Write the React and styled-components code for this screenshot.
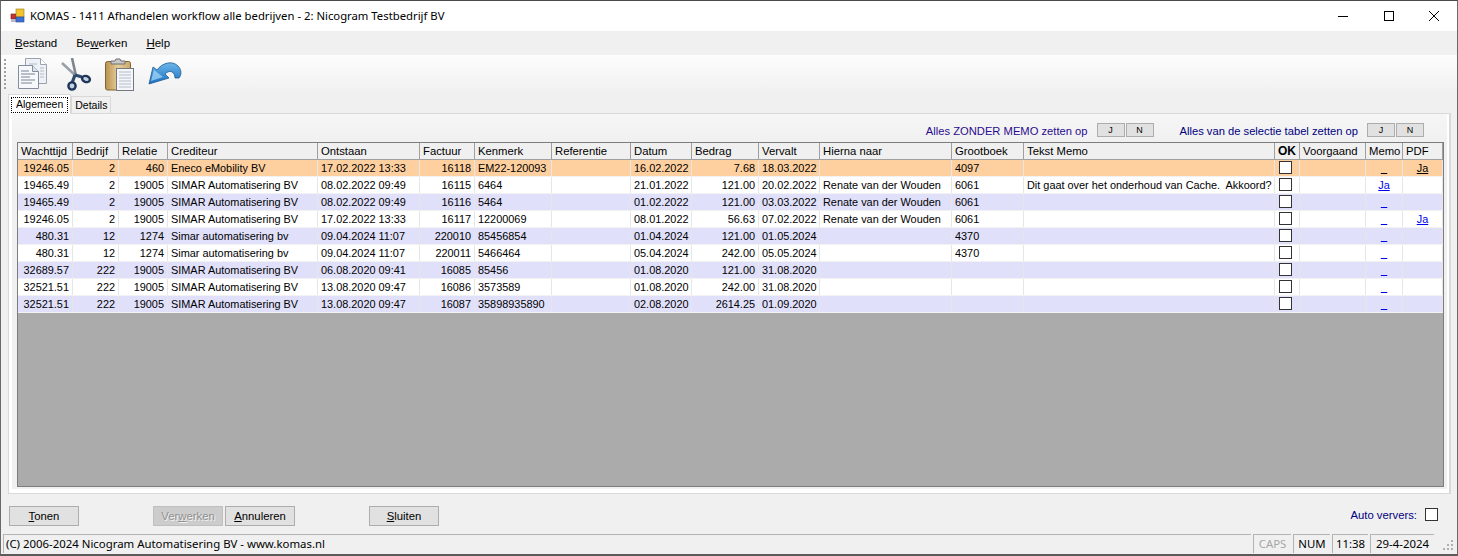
import React from 'react'
import styled, { createGlobalStyle } from 'styled-components'

const GlobalStyle = createGlobalStyle`
html, body { margin: 0; padding: 0; overflow: hidden; background: #f0f0f0; }
* { box-sizing: border-box; }
`

const COLUMNS = '55px 46px 49px 150px 102px 55px 77px 79px 61px 67px 61px 132px 72px 251px 25px 66px 37px 40px'

const Window = styled.div`
width: 1458px;
height: 556px;
display: flex;
flex-direction: column;
background: #f0f0f0;
border-top: 1px solid #4a4a4a;
border-bottom: 2px solid #5a5a5a;
border-left: 1px solid #6a6a6a;
border-right: 1px solid #6a6a6a;
font-family: "Liberation Sans", Arial, sans-serif;
font-size: 11.3px;
color: #000;
overflow: hidden;
`
const TitleBar = styled.div`
height: 30px;
flex: none;
background: #fff;
display: flex;
align-items: center;
padding-left: 9px;
`
const TitleText = styled.div`
font-family: "Noto Sans", sans-serif;
font-size: 11.3px;
margin-left: 4px;
margin-top: -1px;
white-space: nowrap;
`
const WindowControls = styled.div`
margin-left: auto;
display: flex;
align-items: center;
margin-top: -1px;
`
const WindowControl = styled.div`
width: 45.5px;
height: 30px;
display: flex;
align-items: center;
justify-content: center;
`
const MenuBar = styled.div`
height: 24px;
flex: none;
display: flex;
align-items: center;
padding-left: 14px;
gap: 19px;
background: #f0f0f0;
font-size: 11.5px;
`
const MenuItem = styled.div`
white-space: nowrap;
`
const Mnemonic = styled.span`
text-decoration: underline;
`
const ToolBar = styled.div`
height: 38px;
flex: none;
display: flex;
align-items: center;
padding-left: 3px;
background: linear-gradient(#fdfdfd, #f0f0f0);
`
const Grip = styled.div`
width: 2px;
height: 31px;
margin-right: 11px;
background: repeating-linear-gradient(#a0a0a0 0 2px, transparent 2px 4px);
`
const ToolIcons = styled.div`
display: flex;
align-items: center;
gap: 12px;
`
const TabStrip = styled.div`
height: 20px;
flex: none;
display: flex;
align-items: flex-end;
padding-left: 7px;
background: #f0f0f0;
font-size: 10.5px;
`
const Tab = styled.div`
height: ${p => (p.$active ? '20px' : '17px')};
padding: 0 ${p => (p.$active ? '2px' : '3px')};
background: ${p => (p.$active ? '#fff' : '#f0f0f0')};
border: 1px solid #d9d9d9;
border-bottom: none;
display: flex;
align-items: center;
position: relative;
z-index: ${p => (p.$active ? 1 : 0)};
margin-bottom: ${p => (p.$active ? '-1px' : '0')};
`
const TabLabel = styled.span`
border: ${p => (p.$focus ? '1px dotted #000' : 'none')};
padding: 0 ${p => (p.$focus ? '4px' : '0')} ${p => (p.$focus ? '2px' : '0')};
line-height: ${p => (p.$focus ? '12px' : '14px')};
white-space: nowrap;
`
const PanelWrap = styled.div`
height: 381px;
flex: none;
margin: 0 6px 0 7px;
border: 1px solid #d9d9d9;
border-width: 1px 2px 1px 1px;
background: #fff;
padding: 0 2px 4px 3px;
`
const Panel = styled.div`
height: 100%;
background: linear-gradient(#f6f6f6, #f0f0f0 30px);
padding: 0 3px 2px 5px;
display: flex;
flex-direction: column;
`
const SetterBar = styled.div`
height: 28px;
flex: none;
display: flex;
align-items: flex-end;
padding: 0 20px 5px 0;
justify-content: flex-end;
font-size: 11.2px;
`
const SetterLabel = styled.div`
color: ${p => p.$color};
margin-right: 9px;
margin-left: ${p => p.$gap}px;
white-space: nowrap;
`
const SmallButton = styled.div`
width: 28px;
height: 14px;
margin-left: ${p => (p.$second ? '1px' : '0')};
background: #e1e1e1;
border: 1px solid #adadad;
font-size: 9px;
display: flex;
align-items: center;
justify-content: center;
`
const Grid = styled.div`
flex: 1;
background: #ababab;
border: 1px solid #7d7d7d;
overflow: hidden;
`
const HeaderRow = styled.div`
display: grid;
grid-template-columns: ${COLUMNS};
height: 17px;
background: #f0f0f0;
border-bottom: 1px solid #a0a0a0;
`
const HeaderCell = styled.div`
border-right: 1px solid #a0a0a0;
padding-left: 3px;
line-height: 16px;
white-space: nowrap;
overflow: hidden;
font-weight: ${p => (p.$bold ? 700 : 400)};
font-size: ${p => (p.$bold ? '12px' : 'inherit')};
`
const Row = styled.div`
display: grid;
grid-template-columns: ${COLUMNS};
height: 17px;
font-size: 10.9px;
background: ${p => p.$bg};
border-bottom: 1px solid #f2f2f2;
`
const Cell = styled.div`
border-right: 1px solid #e6e6e6;
padding: 0 ${p => (p.$right ? '3px' : '0')} 0 ${p => (p.$right ? '0' : '3px')};
text-align: ${p => (p.$right ? 'right' : 'left')};
line-height: 16px;
white-space: pre;
overflow: hidden;
`
const CheckCell = styled(Cell)`
padding: 1px 0 0 4px;
`
const CheckBox = styled.div`
width: 13px;
height: 13px;
background: #fff;
border: 1px solid #333;
`
const LinkCell = styled(Cell)`
text-align: center;
padding: 0;
color: ${p => (p.$dark ? '#000' : '#0000ee')};
text-decoration: underline;
`
const Footer = styled.div`
height: 40px;
flex: none;
display: flex;
align-items: flex-start;
padding: 12px 0 0 8px;
`
const FootButton = styled.div`
width: 70px;
height: 20px;
flex: none;
margin-left: ${p => p.$offset || 0}px;
background: ${p => (p.$disabled ? '#cccccc' : '#e1e1e1')};
border: 1px solid ${p => (p.$disabled ? '#bfbfbf' : '#adadad')};
color: ${p => (p.$disabled ? '#8f8f8f' : '#000')};
text-shadow: ${p => (p.$disabled ? '1px 1px 0 #f4f4f4' : 'none')};
display: flex;
align-items: center;
justify-content: center;
`
const AutoRefresh = styled.div`
margin-left: auto;
display: flex;
align-items: center;
color: #000080;
padding-right: 19px;
gap: 8px;
margin-top: 1px;
`
const RefreshLabel = styled.span`
margin-top: 2px;
`
const StatusBar = styled.div`
height: 19px;
flex: none;
display: flex;
padding-left: 2px;
position: relative;
`
const StatusCell = styled.div`
border: 1px solid #b4b4b4;
border-width: 1px 0 0 1px;
height: 19px;
width: ${p => p.$width}px;
flex: ${p => (p.$grow ? 1 : 'none')};
margin-left: ${p => (p.$grow ? 0 : 2)}px;
padding: 0 0 2px ${p => (p.$grow ? 2 : 0)}px;
display: flex;
align-items: center;
justify-content: ${p => (p.$grow ? 'flex-start' : 'center')};
color: ${p => (p.$off ? '#a6a6a6' : '#000')};
font-family: "Noto Sans", sans-serif;
font-size: 11.4px;
white-space: nowrap;
`
const ResizeGrip = styled.div`
width: 23px;
flex: none;
display: flex;
align-items: flex-end;
justify-content: flex-end;
padding: 0 3px 2px 0;
`

const rows = [
  ['19246.05', '2', '460', 'Eneco eMobility BV', '17.02.2022 13:33', '16118', 'EM22-120093', '', '16.02.2022', '7.68', '18.03.2022', '', '4097', '', '', '_', 'Ja'],
  ['19465.49', '2', '19005', 'SIMAR Automatisering BV', '08.02.2022 09:49', '16115', '6464', '', '21.01.2022', '121.00', '20.02.2022', 'Renate van der Wouden', '6061', 'Dit gaat over het onderhoud van Cache.  Akkoord?', '', 'Ja', ''],
  ['19465.49', '2', '19005', 'SIMAR Automatisering BV', '08.02.2022 09:49', '16116', '5464', '', '01.02.2022', '121.00', '03.03.2022', 'Renate van der Wouden', '6061', '', '', '_', ''],
  ['19246.05', '2', '19005', 'SIMAR Automatisering BV', '17.02.2022 13:33', '16117', '12200069', '', '08.01.2022', '56.63', '07.02.2022', 'Renate van der Wouden', '6061', '', '', '_', 'Ja'],
  ['480.31', '12', '1274', 'Simar automatisering bv', '09.04.2024 11:07', '220010', '85456854', '', '01.04.2024', '121.00', '01.05.2024', '', '4370', '', '', '_', ''],
  ['480.31', '12', '1274', 'Simar automatisering bv', '09.04.2024 11:07', '220011', '5466464', '', '05.04.2024', '242.00', '05.05.2024', '', '4370', '', '', '_', ''],
  ['32689.57', '222', '19005', 'SIMAR Automatisering BV', '06.08.2020 09:41', '16085', '85456', '', '01.08.2020', '121.00', '31.08.2020', '', '', '', '', '_', ''],
  ['32521.51', '222', '19005', 'SIMAR Automatisering BV', '13.08.2020 09:47', '16086', '3573589', '', '01.08.2020', '242.00', '31.08.2020', '', '', '', '', '_', ''],
  ['32521.51', '222', '19005', 'SIMAR Automatisering BV', '13.08.2020 09:47', '16087', '35898935890', '', '02.08.2020', '2614.25', '01.09.2020', '', '', '', '', '_', ''],
]

const headers = ['Wachttijd', 'Bedrijf', 'Relatie', 'Crediteur', 'Ontstaan', 'Factuur', 'Kenmerk', 'Referentie', 'Datum', 'Bedrag', 'Vervalt', 'Hierna naar', 'Grootboek', 'Tekst Memo', 'OK', 'Voorgaand', 'Memo', 'PDF']
const rightAligned = [0, 1, 2, 5, 9]

const rowColor = (i) => {
  if (i === 0) return '#ffd09f'
  return i % 2 === 1 ? '#ffffff' : '#e0e0fb'
}

const AppIcon = () => (
  <svg width="16" height="16" viewBox="0 0 16 16">
    <rect x="1" y="6" width="5" height="5" fill="#c8322c" stroke="#7a1a16" strokeWidth="0.6" />
    <rect x="6" y="1" width="8" height="8" fill="#f4c430" stroke="#9a7a10" strokeWidth="0.6" />
    <rect x="1" y="11" width="5" height="3" fill="#b8b8c8" />
    <rect x="6" y="9" width="8" height="5" fill="#3f6fd0" stroke="#244a98" strokeWidth="0.6" />
  </svg>
)

const CopyIcon = () => (
  <svg width="32" height="32" viewBox="0 0 32 32">
    <path d="M8.5 .5h15l6 6v19h-21z" fill="#eef1f6" stroke="#9aa2b0" />
    <path d="M23.5 .5v6h6" fill="#fff" stroke="#9aa2b0" />
    <path d="M12 6h8M23 10h4M23 13h4M23 16h4M23 19h4" stroke="#b4bbc8" />
    <path d="M1.5 7.5h14l6 6v17h-20z" fill="#f7f8fb" stroke="#858d9c" />
    <path d="M15.5 7.5v6h6" fill="#dfe3ea" stroke="#858d9c" />
    <path d="M4 13h8M4 16h14M4 19h9M4 22h14M4 25h11" stroke="#7b8395" />
  </svg>
)

const ScissorsIcon = () => (
  <svg width="31" height="33" viewBox="0 0 31 33">
    <path d="M1 5l14 13" stroke="#9aa0a8" strokeWidth="2.6" fill="none" />
    <path d="M11 0l4 18" stroke="#7f858d" strokeWidth="2.6" fill="none" />
    <path d="M14 17l-3 8" stroke="#2f4a70" strokeWidth="3.2" fill="none" />
    <path d="M14 17l7 2" stroke="#2f4a70" strokeWidth="3.2" fill="none" />
    <ellipse cx="11" cy="28" rx="3.6" ry="3.6" fill="#c4d2e4" stroke="#1f3558" strokeWidth="2.4" />
    <ellipse cx="25" cy="21" rx="4" ry="3" fill="#c4d2e4" stroke="#1f3558" strokeWidth="2.4" transform="rotate(20 25 21)" />
  </svg>
)

const ClipboardIcon = () => (
  <svg width="32" height="33" viewBox="0 0 32 33">
    <defs>
      <linearGradient id="board" x1="0" y1="0" x2="1" y2="0">
        <stop offset="0" stopColor="#b8914e" />
        <stop offset="0.5" stopColor="#e6cf9c" />
        <stop offset="1" stopColor="#c9a86a" />
      </linearGradient>
    </defs>
    <rect x="1.5" y="3.5" width="25" height="28.5" rx="2" fill="url(#board)" stroke="#80632e" />
    <path d="M7 6V3h4l1-2h4l1 2h4v3z" fill="#c9c9c9" stroke="#6f6f6f" />
    <rect x="12.5" y="10.5" width="17" height="22" fill="#f4f6fa" stroke="#74797f" />
    <path d="M15 14h12M15 17h12M15 20h12M15 23h12M15 26h12M15 29h12" stroke="#b5bcc8" />
  </svg>
)

const UndoIcon = () => (
  <svg width="34" height="28" viewBox="0 0 34 28">
    <defs>
      <linearGradient id="arrow" x1="0" y1="0" x2="0" y2="1">
        <stop offset="0" stopColor="#6cb6ea" />
        <stop offset="1" stopColor="#1a6fc0" />
      </linearGradient>
    </defs>
    <path d="M1 24L5 7l4 3C14 3 24 0 30 6c4 4 3.5 9 1 12h-4c0-6-5-9-10-4l4 4z" fill="url(#arrow)" stroke="#1d5a94" strokeWidth="0.8" />
    <path d="M3 21L6 10l9 7z" fill="#a8dcf8" opacity="0.7" />
  </svg>
)

const GripDots = () => (
  <svg width="11" height="11" viewBox="0 0 11 11" fill="#b0b0b0">
    <rect x="8" y="0" width="2" height="2" />
    <rect x="4" y="4" width="2" height="2" />
    <rect x="8" y="4" width="2" height="2" />
    <rect x="0" y="8" width="2" height="2" />
    <rect x="4" y="8" width="2" height="2" />
    <rect x="8" y="8" width="2" height="2" />
  </svg>
)

export default function App() {
  return (
    <Window>
      <GlobalStyle />
      <TitleBar>
        <AppIcon />
        <TitleText>KOMAS - 1411 Afhandelen workflow alle bedrijven - 2: Nicogram Testbedrijf BV</TitleText>
        <WindowControls>
          <WindowControl>
            <svg width="10" height="10" viewBox="0 0 10 10"><path d="M0 5.5h10" stroke="#000" /></svg>
          </WindowControl>
          <WindowControl>
            <svg width="10" height="10" viewBox="0 0 10 10"><rect x="0.5" y="0.5" width="9" height="9" fill="none" stroke="#000" /></svg>
          </WindowControl>
          <WindowControl>
            <svg width="10" height="10" viewBox="0 0 10 10"><path d="M0 0l10 10M10 0L0 10" stroke="#000" /></svg>
          </WindowControl>
        </WindowControls>
      </TitleBar>
      <MenuBar>
        <MenuItem><Mnemonic>B</Mnemonic>estand</MenuItem>
        <MenuItem>Be<Mnemonic>w</Mnemonic>erken</MenuItem>
        <MenuItem><Mnemonic>H</Mnemonic>elp</MenuItem>
      </MenuBar>
      <ToolBar>
        <Grip />
        <ToolIcons>
          <CopyIcon />
          <ScissorsIcon />
          <ClipboardIcon />
          <UndoIcon />
        </ToolIcons>
      </ToolBar>
      <TabStrip>
        <Tab $active><TabLabel $focus>Algemeen</TabLabel></Tab>
        <Tab><TabLabel>Details</TabLabel></Tab>
      </TabStrip>
      <PanelWrap>
        <Panel>
          <SetterBar>
            <SetterLabel $color="#2a0a90">Alles ZONDER MEMO zetten op</SetterLabel>
            <SmallButton>J</SmallButton>
            <SmallButton $second>N</SmallButton>
            <SetterLabel $color="#000080" $gap={26}>Alles van de selectie tabel zetten op</SetterLabel>
            <SmallButton>J</SmallButton>
            <SmallButton $second>N</SmallButton>
          </SetterBar>
          <Grid>
            <HeaderRow>
              {headers.map((h) => (
                <HeaderCell key={h} $bold={h === 'OK'}>{h}</HeaderCell>
              ))}
            </HeaderRow>
            {rows.map((row, i) => (
              <Row key={i} $bg={rowColor(i)}>
                {row.slice(0, 14).map((value, c) => (
                  <Cell key={c} $right={rightAligned.includes(c)}>{value}</Cell>
                ))}
                <CheckCell><CheckBox /></CheckCell>
                <Cell>{row[14]}</Cell>
                <LinkCell $dark={i === 0}>{row[15]}</LinkCell>
                <LinkCell $dark={i === 0}>{row[16]}</LinkCell>
              </Row>
            ))}
          </Grid>
        </Panel>
      </PanelWrap>
      <Footer>
        <FootButton><span><Mnemonic>T</Mnemonic>onen</span></FootButton>
        <FootButton $offset={74} $disabled><span>Ver<Mnemonic>w</Mnemonic>erken</span></FootButton>
        <FootButton $offset={2}><span><Mnemonic>A</Mnemonic>nnuleren</span></FootButton>
        <FootButton $offset={74}><span><Mnemonic>S</Mnemonic>luiten</span></FootButton>
        <AutoRefresh>
          <RefreshLabel>Auto ververs:</RefreshLabel>
          <CheckBox />
        </AutoRefresh>
      </Footer>
      <StatusBar>
        <StatusCell $grow>(C) 2006-2024 Nicogram Automatisering BV - www.komas.nl</StatusCell>
        <StatusCell $width={38} $off>CAPS</StatusCell>
        <StatusCell $width={37}>NUM</StatusCell>
        <StatusCell $width={36}>11:38</StatusCell>
        <StatusCell $width={64}>29-4-2024</StatusCell>
        <ResizeGrip><GripDots /></ResizeGrip>
      </StatusBar>
    </Window>
  )
}
